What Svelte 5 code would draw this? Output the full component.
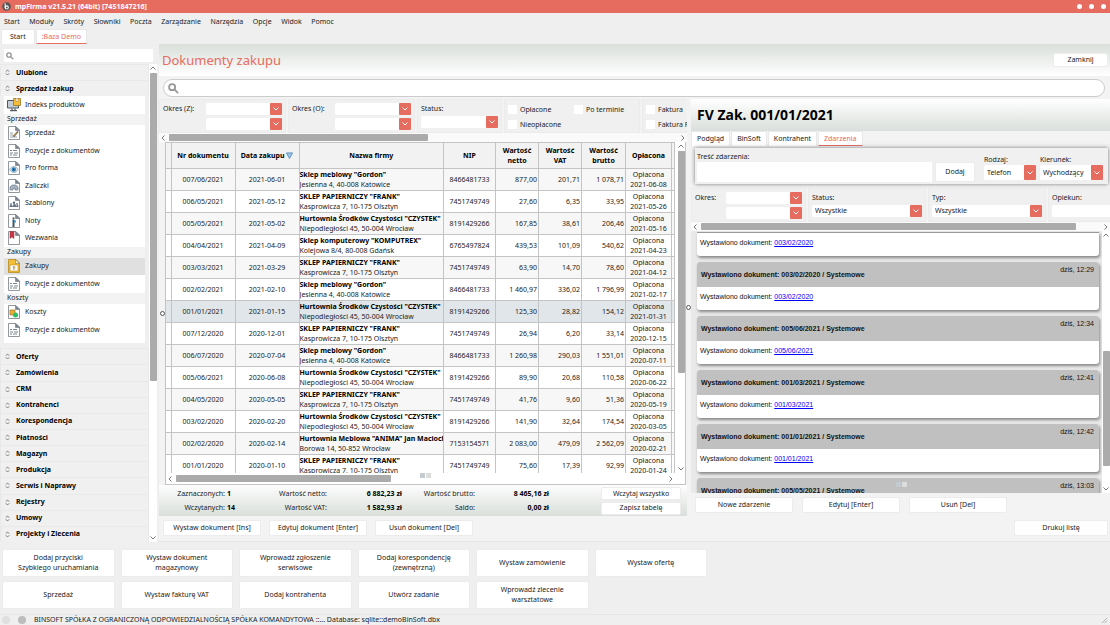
<script>
  const MENU = ['Start', 'Moduły', 'Skróty', 'Słowniki', 'Poczta', 'Zarządzanie', 'Narzędzia', 'Opcje', 'Widok', 'Pomoc'];

  const NAV_ITEMS = [
    { text: 'Indeks produktów', icon: 'index' },
    { label: 'Sprzedaż' },
    { text: 'Sprzedaż', icon: 'pen' },
    { text: 'Pozycje z dokumentów', icon: 'list' },
    { text: 'Pro forma', icon: 'eye' },
    { text: 'Zaliczki', icon: 'hand' },
    { text: 'Szablony', icon: 'people' },
    { text: 'Noty', icon: 'note' },
    { text: 'Wezwania', icon: 'flag' },
    { label: 'Zakupy' },
    { text: 'Zakupy', icon: 'buy', active: true },
    { text: 'Pozycje z dokumentów', icon: 'list' },
    { label: 'Koszty' },
    { text: 'Koszty', icon: 'cost' },
    { text: 'Pozycje z dokumentów', icon: 'list' },
  ];

  const SECTIONS = ['Oferty', 'Zamówienia', 'CRM', 'Kontrahenci', 'Korespondencja', 'Płatności', 'Magazyn', 'Produkcja', 'Serwis i Naprawy', 'Rejestry', 'Umowy', 'Projekty i Zlecenia'];

  const GORDON = { name: 'Sklep meblowy "Gordon"', address: 'Jesienna 4, 40-008 Katowice', nip: '8466481733' };
  const FRANK = { name: 'SKLEP PAPIERNICZY "FRANK"', address: 'Kasprowicza 7, 10-175 Olsztyn', nip: '7451749749' };
  const CZYSTEK = { name: 'Hurtownia Środków Czystości "CZYSTEK"', address: 'Niepodległości 45, 50-004 Wrocław', nip: '8191429266' };
  const KOMPUTREX = { name: 'Sklep komputerowy "KOMPUTREX"', address: 'Kolejowa 8/4, 80-008 Gdańsk', nip: '6765497824' };
  const ANIMA = { name: 'Hurtownia Meblowa "ANIMA" Jan Macioch', address: 'Borowa 14, 50-852 Wrocław', nip: '7153154571' };

  const ROWS = [
    { nr: '007/06/2021', date: '2021-06-01', firm: GORDON, net: '877,00', vat: '201,71', gross: '1 078,71', paid: '2021-06-08' },
    { nr: '006/05/2021', date: '2021-05-12', firm: FRANK, net: '27,60', vat: '6,35', gross: '33,95', paid: '2021-05-26' },
    { nr: '005/05/2021', date: '2021-05-02', firm: CZYSTEK, net: '167,85', vat: '38,61', gross: '206,46', paid: '2021-05-16' },
    { nr: '004/04/2021', date: '2021-04-09', firm: KOMPUTREX, net: '439,53', vat: '101,09', gross: '540,62', paid: '2021-04-23' },
    { nr: '003/03/2021', date: '2021-03-29', firm: FRANK, net: '63,90', vat: '14,70', gross: '78,60', paid: '2021-04-12' },
    { nr: '002/02/2021', date: '2021-02-10', firm: GORDON, net: '1 460,97', vat: '336,02', gross: '1 796,99', paid: '2021-02-17' },
    { nr: '001/01/2021', date: '2021-01-15', firm: CZYSTEK, net: '125,30', vat: '28,82', gross: '154,12', paid: '2021-01-31' },
    { nr: '007/12/2020', date: '2020-12-01', firm: FRANK, net: '26,94', vat: '6,20', gross: '33,14', paid: '2020-12-15' },
    { nr: '006/07/2020', date: '2020-07-04', firm: GORDON, net: '1 260,98', vat: '290,03', gross: '1 551,01', paid: '2020-07-11' },
    { nr: '005/06/2021', date: '2020-06-08', firm: CZYSTEK, net: '89,90', vat: '20,68', gross: '110,58', paid: '2020-06-22' },
    { nr: '004/05/2020', date: '2020-05-05', firm: FRANK, net: '41,76', vat: '9,60', gross: '51,36', paid: '2020-05-19' },
    { nr: '003/02/2020', date: '2020-02-20', firm: CZYSTEK, net: '141,90', vat: '32,64', gross: '174,54', paid: '2020-03-05' },
    { nr: '002/02/2020', date: '2020-02-14', firm: ANIMA, net: '2 083,00', vat: '479,09', gross: '2 562,09', paid: '2020-02-21' },
    { nr: '001/01/2020', date: '2020-01-10', firm: FRANK, net: '75,60', vat: '17,39', gross: '92,99', paid: '2020-01-24' },
  ];

  const EVENTS = [
    { nr: '003/02/2020', time: '12:29' },
    { nr: '005/06/2021', time: '12:34' },
    { nr: '001/03/2021', time: '12:41' },
    { nr: '001/01/2021', time: '12:42' },
    { nr: '005/05/2021', time: '13:03' },
  ];

  const QUICK = [
    ['Dodaj przyciski', 'Szybkiego uruchamiania'], ['Wystaw dokument', 'magazynowy'], ['Wprowadź zgłoszenie', 'serwisowe'],
    ['Dodaj korespondencję', '(zewnętrzną)'], ['Wystaw zamówienie'], ['Wystaw ofertę'],
    ['Sprzedaż'], ['Wystaw fakturę VAT'], ['Dodaj kontrahenta'], ['Utwórz zadanie'], ['Wprowadź zlecenie', 'warsztatowe'],
  ];

  let selected = $state('001/01/2021');
</script>

{#snippet chevron(dir)}
  <svg class="chevron {dir}" viewBox="0 0 8 8" aria-hidden="true"><path d="M1.500 5.500 4 3l2.500 2.500" /></svg>
{/snippet}

{#snippet magnifier()}
  <svg class="magnifier" viewBox="0 0 12 12" aria-hidden="true"><circle cx="4.500" cy="4.500" r="3.300" /><path d="m7 7 4 4" /></svg>
{/snippet}

{#snippet combo(name, value = '')}
  <span class="combo">
    <select aria-label={name}><option>{value}</option></select>
    <span class="combo-arrow">{@render chevron('down')}</span>
  </span>
{/snippet}

{#snippet docIcon(kind)}
  <svg class="doc-icon" viewBox="0 0 14 14" aria-hidden="true">
    {#if kind === 'index'}
      <path d="M.5 2.500h11v7.500H.5z" fill="#c3ccd4" stroke="#4e565f" />
      <path d="M3 12.700h7M5 10.500v2M8 10.500v2" stroke="#343a40" />
      <path d="M6.500.5h7V7.500h-7z" fill="#f7bd35" stroke="#99732c" stroke-width=".8" />
      <path d="M9 .5v3h2V.5" fill="#fff" stroke="#99732c" stroke-width=".5" />
    {:else}
      <path d="M1.500.5h7.500l3.500 3.500v9.500h-11z" fill={kind === 'buy' ? '#f4bf38' : '#fff'} stroke={kind === 'buy' ? '#b98a1d' : '#777d86'} stroke-width=".8" />
      <path d="M8.500.5V4.500h4z" fill={kind === 'buy' ? '#fff0b7' : '#7c848f'} stroke="#626a75" stroke-width=".5" />
      {#if kind === 'pen'}
        <path d="M3 7h3M3 9h3M3 11h7" stroke="#848b93" stroke-width=".8" />
        <path d="m6.500 10.500 4.500-5" stroke="#4c4d50" stroke-width="1.800" /><path d="m7 9.800 3.500-4" stroke="#dcac48" />
      {:else if kind === 'list'}
        <path d="M3 6.500h2M6 6.500h4M3 9h3M7 9h4M3 11h2M6 11h4" stroke="#7a8490" />
      {:else if kind === 'eye'}
        <path d="M2.500 8.500c2-4 6.500-4 8.500 0-2 4-6.500 4-8.500 0z" fill="#dae6ee" stroke="#7c8b98" stroke-width=".6" />
        <circle cx="6.800" cy="8.500" r="2.200" fill="#2e81b7" /><circle cx="6.800" cy="8.500" r=".8" fill="#193f68" />
      {:else if kind === 'hand'}
        <path d="M3 11V8l2-2h4l2 2v3H8V9L6 10v1z" fill="#a6b2bf" stroke="#687481" stroke-width=".6" />
      {:else if kind === 'people'}
        <path d="M2.500 11c0-3 3-3 3 0 0-4 4-4 4 0 0-3 2-3 2 0z" fill="#69758a" />
        <circle cx="4" cy="8" r="1" fill="#7e899a" /><circle cx="7" cy="6.800" r="1.200" fill="#566579" /><circle cx="10" cy="8" r="1" fill="#7e899a" />
      {:else if kind === 'note'}
        <path d="M5.500 5.500h2V13h-2z" fill="#455465" /><path d="M7 6.500h2v2H7z" fill="#3c9cd2" /><circle cx="6.500" cy="4.300" r="1" fill="#455465" />
      {:else if kind === 'flag'}
        <path d="M3 .5h4v7L5 6 3 7.500z" fill="#c93645" stroke="#8c3743" stroke-width=".5" />
      {:else if kind === 'buy'}
        <path d="M3 6h8v6H3z" fill="#fff" stroke="#c08c16" stroke-width=".6" /><path d="M7 11V7.500M5.700 8.800 7 7.500l1.300 1.300" fill="none" stroke="#97731f" stroke-width=".8" />
      {:else if kind === 'cost'}
        <path d="M3 5h5v5H3z" fill="#edac32" stroke="#8b6c34" stroke-width=".6" /><circle cx="8.500" cy="10" r="2.500" fill="#29bf68" />
      {/if}
    {/if}
  </svg>
{/snippet}

{#snippet hscroll(size)}
  <div class="hscroll">
    {@render chevron('left')}
    <div class="hscroll-track"><div class="thumb" style:width="{size}%"></div></div>
    {@render chevron('right')}
  </div>
{/snippet}

{#snippet vscroll(start, size)}
  <div class="vscroll">
    {@render chevron('up')}
    <div class="vscroll-track"><div class="thumb" style:margin-top="{start}px" style:height="{size}%"></div></div>
    {@render chevron('down')}
  </div>
{/snippet}

{#snippet section(name)}
  <button class="section">
    <svg class="updown" viewBox="0 0 6 8" aria-hidden="true"><path d="M1 3 3 1l2 2M1 5l2 2 2-2" /></svg>
    {name}
  </button>
{/snippet}

<div class="app">
  <header class="titlebar">
    <svg class="logo" viewBox="0 0 10 10" aria-hidden="true">
      <circle cx="5" cy="5" r="4.800" fill="#555" />
      <path d="M3.500 1.500v5.500" stroke="#fff" stroke-width="1.200" /><circle cx="5.300" cy="6" r="1.700" fill="none" stroke="#fff" stroke-width="1.200" />
    </svg>
    <span>mpFirma v21.5.21 (64bit) [7451847216]</span>
    <div class="window-dots"><i></i><i></i><i></i></div>
  </header>

  <nav class="menu">
    {#each MENU as item}<a href="#menu">{item}</a>{/each}
  </nav>

  <div class="tabs">
    <button class="tab">Start</button>
    <button class="tab active">:Baza Demo</button>
  </div>

  <div class="workspace">
    <aside class="sidebar">
      <label class="side-search">{@render magnifier()}<input type="search" aria-label="Szukaj w menu" /></label>
      <div class="side-body">
        <div class="side-list">
          {@render section('Ulubione')}
          {@render section('Sprzedaż i zakup')}
          <div class="side-panel">
            {#each NAV_ITEMS as item}
              {#if item.label}
                <div class="side-label">{item.label}</div>
              {:else}
                <a class="side-item" class:active={item.active} href="#nav">{@render docIcon(item.icon)}{item.text}</a>
              {/if}
            {/each}
          </div>
          {#each SECTIONS as name}{@render section(name)}{/each}
        </div>
        {@render vscroll(0, 67)}
      </div>
    </aside>

    <main class="content">
      <div class="page-head">
        <h1>Dokumenty zakupu</h1>
        <button class="btn close">Zamknij</button>
      </div>
      <label class="search">{@render magnifier()}<input type="search" aria-label="Szukaj dokumentu" /></label>

      <div class="panels">
        <section class="docs">
          <div class="filters">
            <div class="filter period">
              <span>Okres (Z):</span>
              <div class="combo-stack">{@render combo('Okres (Z) od')}{@render combo('Okres (Z) do')}</div>
            </div>
            <div class="filter period">
              <span>Okres (O):</span>
              <div class="combo-stack">{@render combo('Okres (O) od')}{@render combo('Okres (O) do')}</div>
            </div>
            <div class="filter status"><span>Status:</span>{@render combo('Status')}</div>
            <div class="filter checks">
              <label><input type="checkbox" />Opłacone</label>
              <label><input type="checkbox" />Po terminie</label>
              <label><input type="checkbox" />Nieopłacone</label>
            </div>
            <div class="filter kinds">
              <label><input type="checkbox" />Faktura</label>
              <label><input type="checkbox" />Faktura RR</label>
            </div>
          </div>
          {@render hscroll(51)}

          <div class="grid-box">
            <div class="grid-main">
              <div class="grid-clip">
                <table>
                  <colgroup>
                    <col class="c-mark" /><col class="c-nr" /><col class="c-nr" /><col /><col class="c-nip" />
                    <col class="c-sum" /><col class="c-sum" /><col class="c-gross" /><col class="c-paid" /><col class="c-end" />
                  </colgroup>
                  <thead>
                    <tr>
                      <th></th>
                      <th>Nr dokumentu</th>
                      <th>Data zakupu <svg class="sort" viewBox="0 0 8 8" aria-hidden="true"><path d="M.5 1h7L4 7.500z" /></svg></th>
                      <th>Nazwa firmy</th>
                      <th>NIP</th>
                      <th>Wartość<br />netto</th>
                      <th>Wartość<br />VAT</th>
                      <th>Wartość<br />brutto</th>
                      <th>Opłacona</th>
                      <th></th>
                    </tr>
                  </thead>
                  <tbody>
                    {#each ROWS as row}
                      <tr class:selected={row.nr === selected} onclick={() => (selected = row.nr)}>
                        <td></td>
                        <td>{row.nr}</td>
                        <td>{row.date}</td>
                        <td class="firm"><b>{row.firm.name}</b><br />{row.firm.address}</td>
                        <td>{row.firm.nip}</td>
                        <td class="num">{row.net}</td>
                        <td class="num">{row.vat}</td>
                        <td class="num">{row.gross}</td>
                        <td>Opłacona<br />{row.paid}</td>
                        <td></td>
                      </tr>
                    {/each}
                  </tbody>
                </table>
              </div>
              {@render vscroll(0, 71)}
            </div>
            {@render hscroll(44)}
            <div class="pager"><i></i><i></i></div>
          </div>

          <div class="summary">
            <span>Zaznaczonych:</span><b class="count">1</b>
            <span>Wartość netto:</span><b>6 882,23 zł</b>
            <span>Wartość brutto:</span><b>8 465,16 zł</b>
            <button class="btn">Wczytaj wszystko</button>
            <span>Wczytanych:</span><b class="count">14</b>
            <span>Wartość VAT:</span><b>1 582,93 zł</b>
            <span>Saldo:</span><b>0,00 zł</b>
            <button class="btn">Zapisz tabelę</button>
          </div>
          <span class="handle left"></span>
          <span class="handle right"></span>
        </section>

        <section class="details">
          <h2>FV Zak. 001/01/2021</h2>
          <div class="tabs detail-tabs">
            <button class="tab">Podgląd</button>
            <button class="tab">BinSoft</button>
            <button class="tab">Kontrahent</button>
            <button class="tab active">Zdarzenia</button>
          </div>

          <div class="event-form">
            <label class="event-text">Treść zdarzenia:<input type="text" /></label>
            <button class="btn add">Dodaj</button>
            <div class="field kind"><span>Rodzaj:</span>{@render combo('Rodzaj', 'Telefon')}</div>
            <div class="field direction"><span>Kierunek:</span>{@render combo('Kierunek', 'Wychodzący')}</div>
          </div>

          <div class="filters">
            <div class="filter event-period">
              <span>Okres:</span>
              <div class="combo-stack">{@render combo('Okres od')}{@render combo('Okres do')}</div>
            </div>
            <div class="filter wide"><span>Status:</span>{@render combo('Status zdarzenia', 'Wszystkie')}</div>
            <div class="filter wide"><span>Typ:</span>{@render combo('Typ', 'Wszystkie')}</div>
            <div class="filter wide"><span>Opiekun:</span>{@render combo('Opiekun')}</div>
          </div>
          {@render hscroll(94)}

          <div class="events">
            <div class="event-list">
              <article class="event first">
                <p>Wystawiono dokument: <a href="#doc">003/02/2020</a></p>
              </article>
              {#each EVENTS as event}
                <article class="event">
                  <header><b>Wystawiono dokument: {event.nr} / Systemowe</b><time>dziś, {event.time}</time></header>
                  <p>Wystawiono dokument: <a href="#doc">{event.nr}</a></p>
                </article>
              {/each}
            </div>
            {@render vscroll(111, 47)}
            <div class="pager"><i></i><i></i></div>
          </div>

          <div class="event-actions">
            <button class="btn">Nowe zdarzenie</button>
            <button class="btn">Edytuj [Enter]</button>
            <button class="btn">Usuń [Del]</button>
          </div>
        </section>
      </div>

      <div class="actions">
        <button class="btn">Wystaw dokument [Ins]</button>
        <button class="btn">Edytuj dokument [Enter]</button>
        <button class="btn">Usuń dokument [Del]</button>
        <button class="btn print">Drukuj listę</button>
      </div>
    </main>
  </div>

  <div class="quick">
    {#each QUICK as lines}
      <button class="btn">{#each lines as line}<span>{line}</span>{/each}</button>
    {/each}
  </div>

  <footer class="statusbar">
    <i></i><i class="on"></i>
    <span>BINSOFT SPÓŁKA Z OGRANICZONĄ ODPOWIEDZIALNOŚCIĄ SPÓŁKA KOMANDYTOWA ::... Database: sqlite::demoBinSoft.dbx</span>
    <svg class="grip" viewBox="0 0 8 8" aria-hidden="true"><path d="M7 1 1 7M7 4 4 7" /></svg>
  </footer>
</div>

<style>
  :global(body) {
    margin: 0;
    background: #efefef;
  }

  .app {
    display: flex;
    flex-direction: column;
    min-height: 100vh;
    color: #222;
    font-family: 'Noto Sans', 'Open Sans', sans-serif;
    font-size: 7px;
    line-height: 10px;
  }

  .app *,
  .app *::before {
    box-sizing: border-box;
  }

  button,
  input,
  select {
    margin: 0;
    padding: 0;
    border: 0;
    color: inherit;
    font: inherit;
    outline: none;
  }

  input,
  select {
    min-width: 0;
    background: #fff;
  }

  a {
    color: inherit;
    text-decoration: none;
  }

  h1,
  h2,
  p {
    margin: 0;
  }

  /* window frame */
  .titlebar {
    display: flex;
    align-items: center;
    gap: 4px;
    height: 13px;
    padding: 0 2px;
    background: #e66c60;
    color: #fff;
    font-weight: 700;
  }

  .logo {
    width: 9px;
    height: 9px;
  }

  .window-dots {
    display: flex;
    gap: 7px;
    margin-left: auto;
    padding-right: 2px;
  }

  .window-dots i {
    width: 5px;
    height: 5px;
    border-radius: 50%;
    background: #fff;
  }

  .menu {
    display: flex;
    align-items: center;
    justify-content: space-between;
    width: 338px;
    height: 16px;
    padding: 1px 4px 0;
  }

  .tabs {
    display: flex;
    gap: 1px;
    height: 15px;
    padding-left: 1px;
  }

  .tab {
    padding: 0 8px;
    border: 1px solid #e8e8e8;
    border-bottom: 0;
    border-radius: 2px 2px 0 0;
    background: #fff;
  }

  .tab.active {
    padding: 0 5px;
    border-bottom: 1px solid #e66c60;
    color: #e66c60;
  }

  .workspace {
    display: flex;
    flex: 1;
    gap: 2px;
  }

  /* scroll bars and glyphs */
  .chevron {
    flex: none;
    width: 8px;
    height: 8px;
    fill: none;
    stroke: #777;
    stroke-width: 1;
  }

  .chevron.down {
    transform: rotate(180deg);
  }

  .chevron.left {
    transform: rotate(-90deg);
  }

  .chevron.right {
    transform: rotate(90deg);
  }

  .magnifier {
    flex: none;
    width: 11px;
    height: 11px;
    fill: none;
    stroke: #999;
    stroke-width: 2;
  }

  .hscroll {
    display: flex;
    align-items: center;
    gap: 2px;
    height: 9px;
    background: #fafafa;
  }

  .hscroll-track {
    flex: 1;
    height: 7px;
  }

  .vscroll {
    display: flex;
    flex: none;
    flex-direction: column;
    align-items: center;
    gap: 1px;
    width: 8px;
    background: #fff;
  }

  .vscroll-track {
    flex: 1;
    width: 7px;
  }

  .thumb {
    height: 100%;
    border-radius: 1px;
    background: #ababab;
  }

  /* sidebar */
  .sidebar {
    display: flex;
    flex: none;
    flex-direction: column;
    width: 157px;
    padding-top: 5px;
  }

  .side-search {
    display: flex;
    align-items: center;
    height: 13px;
    margin: 0 4px 2px;
    padding-left: 2px;
    background: #fff;
  }

  .side-search input {
    flex: 1;
    height: 11px;
  }

  .side-search .magnifier {
    width: 8px;
    height: 8px;
  }

  .side-body {
    display: flex;
    flex: 1;
  }

  .side-list {
    display: flex;
    flex: 1;
    flex-direction: column;
  }

  .section {
    display: flex;
    flex: 1 0 16px;
    align-items: center;
    gap: 6px;
    padding-left: 4px;
    border: 1px solid #e9e9e9;
    border-width: 1px 1px 0;
    background: #f0f0f0;
    color: #000;
    font-weight: 700;
  }

  .updown {
    width: 5px;
    height: 7px;
    fill: none;
    stroke: #666;
    stroke-width: 1;
  }

  .side-panel {
    display: flex;
    flex-direction: column;
    min-height: 247px;
    margin: 0 4px 5px;
    padding-bottom: 5px;
    background: #fff;
  }

  .side-label {
    height: 11px;
    padding-left: 3px;
    background: #f3f3f3;
  }

  .side-item {
    display: flex;
    flex: 1;
    align-items: center;
    gap: 4px;
    padding-left: 3px;
  }

  .side-item.active {
    background: #e0e0e0;
  }

  .doc-icon {
    width: 14px;
    height: 14px;
  }

  /* page */
  .content {
    display: flex;
    flex: 1;
    flex-direction: column;
    min-width: 0;
    background: #f3f3f3;
  }

  .page-head {
    display: flex;
    align-items: center;
    justify-content: space-between;
    height: 32px;
    padding: 0 2px 0 3px;
    background: linear-gradient(#d9dfda, #fff);
  }

  h1 {
    color: #e66c60;
    font-size: 13px;
    font-weight: 400;
    line-height: 20px;
  }

  .btn {
    border: 1px solid #ececec;
    border-radius: 2px;
    background: #fff;
    white-space: nowrap;
  }

  .close {
    width: 55px;
    height: 14px;
  }

  .search {
    display: flex;
    align-items: center;
    height: 18px;
    margin: 3px 5px 2px 4px;
    padding: 0 9px 0 4px;
    border: 1px solid #ccc;
    border-radius: 9px;
    background: #fff;
  }

  .search input {
    flex: 1;
    height: 14px;
  }

  .panels {
    display: grid;
    grid-template-columns: minmax(0, 528fr) minmax(0, 419fr);
    gap: 4px;
    flex: 1;
  }

  .docs {
    position: relative;
    display: flex;
    flex-direction: column;
  }

  .filters {
    display: flex;
    gap: 2px;
    height: 34px;
    overflow: hidden;
  }

  .filter {
    flex: none;
    padding: 4px 3px 0;
    border: 1px solid #ebebeb;
    background: #f0f0f0;
    white-space: nowrap;
  }

  .period,
  .event-period {
    display: flex;
    justify-content: space-between;
    width: 127px;
  }

  .combo-stack {
    display: flex;
    flex-direction: column;
    gap: 3px;
    width: 76px;
    margin-top: -1px;
  }

  .combo {
    display: flex;
    height: 12px;
  }

  .combo select {
    flex: 1;
    padding-left: 3px;
    border-radius: 2px 0 0 2px;
    appearance: none;
  }

  .combo-arrow {
    display: grid;
    place-items: center;
    width: 12px;
    border-radius: 1px;
    background: #e66c60;
  }

  .combo-arrow .chevron {
    stroke: #fff;
  }

  .status {
    width: 85px;
  }

  .status .combo {
    margin-top: 2px;
  }

  .checks {
    display: grid;
    grid-template-columns: 66px 66px;
    width: 136px;
    padding-top: 2px;
  }

  .kinds {
    display: grid;
    width: 60px;
    padding-top: 2px;
  }

  .filter label {
    display: flex;
    align-items: center;
    gap: 3px;
  }

  .filter input[type='checkbox'] {
    width: 9px;
    height: 9px;
    appearance: none;
  }

  /* documents table */
  .grid-box {
    position: relative;
    display: flex;
    flex: 1;
    flex-direction: column;
    margin: 0 1px 0 6px;
    border: 1px solid #c4c4c4;
    border-top: 0;
    background: #fff;
  }

  .grid-box .hscroll {
    height: 11px;
    padding-right: 10px;
    background: #fff;
  }

  .grid-main {
    display: flex;
    flex: 1 0 330px;
    height: 330px;
  }

  .grid-clip {
    flex: 1;
    height: 100%;
    overflow: hidden;
  }

  .grid-main .vscroll {
    margin-left: 2px;
  }

  table {
    width: 100%;
    border-collapse: collapse;
    table-layout: fixed;
    line-height: 10px;
  }

  .c-mark { width: 5px; }
  .c-nr { width: 64px; }
  .c-nip { width: 52px; }
  .c-sum { width: 43px; }
  .c-gross { width: 44px; }
  .c-paid { width: 46px; }
  .c-end { width: 3px; }

  th,
  td {
    height: 22px;
    padding: 0 1px;
    border: 1px solid #c4c4c4;
    border-left: 0;
    overflow: hidden;
    text-align: center;
    white-space: nowrap;
  }

  th {
    height: 26px;
    background: #f2f2f2;
    color: #000;
  }

  th:first-child,
  td:first-child,
  th:last-child,
  td:last-child,
  td.firm {
    padding: 0;
  }

  tbody tr:nth-child(odd) {
    background: #f7f7f7;
  }

  tbody tr.selected {
    background: #e1e6ea;
  }

  td.firm {
    text-align: left;
  }

  td b {
    color: #000;
  }

  td.num {
    text-align: right;
  }

  .sort {
    width: 7px;
    height: 7px;
    fill: #9cc4e8;
    stroke: #5d8fbd;
    vertical-align: -1px;
  }

  .pager {
    position: absolute;
    bottom: 6px;
    left: 49%;
    display: flex;
    gap: 1px;
  }

  .pager i {
    width: 5px;
    height: 5px;
    background: #dcdcdc;
  }

  .pager i:first-child {
    background: #c3cbd0;
  }

  .handle {
    position: absolute;
    top: 212px;
    width: 5px;
    height: 5px;
    border: 1px solid #555;
    border-radius: 50%;
    background: #fff;
  }

  .handle.left {
    left: 1px;
  }

  .handle.right {
    top: 206px;
    right: -4px;
  }

  .summary {
    display: grid;
    grid-template-columns: 66px 30px 72px 75px 73px 74px 1fr;
    align-items: center;
    row-gap: 1px;
    height: 31px;
    padding: 2px 6px 1px 0;
    background: linear-gradient(#fdfdfd, #d9dfda);
    text-align: right;
  }

  .summary b {
    color: #000;
  }

  .summary .count {
    padding-left: 2px;
    text-align: left;
  }

  .summary .btn {
    justify-self: end;
    width: 80px;
    height: 13px;
  }

  /* details panel */
  .details {
    display: flex;
    flex-direction: column;
    min-width: 0;
  }

  h2 {
    height: 32px;
    padding: 0 6px;
    background: linear-gradient(#fff, #d9dfda);
    color: #000;
    font-size: 14px;
    line-height: 32px;
  }

  .detail-tabs {
    padding-left: 0;
  }

  .detail-tabs .tab {
    padding: 0 5px;
  }

  .event-form {
    display: flex;
    align-items: flex-end;
    height: 36px;
    margin: 2px 2px 4px 4px;
    padding: 3px 5px 2px 2px;
    background: #f0f0f0;
    box-shadow: 0 0 4px #777;
  }

  .event-text {
    display: flex;
    flex: 1;
    flex-direction: column;
  }

  .event-text input {
    height: 20px;
  }

  .add {
    width: 40px;
    height: 20px;
    margin: 0 9px 0 3px;
  }

  .field {
    margin-bottom: 2px;
  }

  .kind {
    width: 52px;
    margin-right: 4px;
  }

  .direction {
    width: 63px;
  }

  .field .combo {
    height: 15px;
  }

  .event-period {
    width: 115px;
  }

  .wide {
    width: 118px;
  }

  .wide .combo {
    margin-top: 2px;
  }

  .events {
    position: relative;
    display: flex;
    flex: 1 0 262px;
    height: 262px;
  }

  .event-list {
    flex: 1;
    height: 100%;
    padding: 1px 3px 0 6px;
    overflow: hidden;
    background: #e9e9e9;
    color: #111;
    font-family: 'Liberation Sans', Arial, sans-serif;
  }

  .event {
    margin-bottom: 6px;
    border-radius: 3px;
    background: #fff;
    box-shadow: 1px 2px 3px #888;
  }

  .event.first {
    border-top: 1px solid #999;
    border-radius: 0 0 3px 3px;
  }

  .event header {
    display: flex;
    justify-content: space-between;
    height: 25px;
    padding: 3px 5px 0 4px;
    border-radius: 3px 3px 0 0;
    background: #c0c0c0;
  }

  .event header b {
    padding-top: 5px;
  }

  .event p {
    height: 23px;
    padding: 5px 3px;
  }

  .event a {
    color: #00f;
    text-decoration: underline;
  }

  .event-actions {
    display: flex;
    gap: 9px;
    padding: 4px 4px 3px;
  }

  .event-actions .btn,
  .actions .btn {
    width: 98px;
    height: 16px;
  }

  .actions {
    display: flex;
    gap: 8px;
    padding: 4px 2px 5px 4px;
    border-bottom: 1px solid #e6e6e6;
  }

  .actions .print {
    width: 94px;
    margin-left: auto;
  }

  /* quick launch */
  .quick {
    display: grid;
    grid-template-columns: repeat(6, 1fr);
    gap: 4px 6px;
    width: 709px;
    padding: 7px 2px 5px;
  }

  .quick .btn {
    display: flex;
    flex-direction: column;
    align-items: center;
    justify-content: center;
    height: 28px;
  }

  .statusbar {
    display: flex;
    align-items: center;
    gap: 8px;
    height: 11px;
    padding: 0 2px;
    border-top: 1px solid #e6e6e6;
  }

  .statusbar i {
    width: 8px;
    height: 8px;
    border-radius: 50%;
    background: #dfdfdf;
  }

  .statusbar i.on {
    background: #bdbdbd;
  }

  .grip {
    width: 7px;
    height: 7px;
    margin-left: auto;
    stroke: #aaa;
  }
</style>
